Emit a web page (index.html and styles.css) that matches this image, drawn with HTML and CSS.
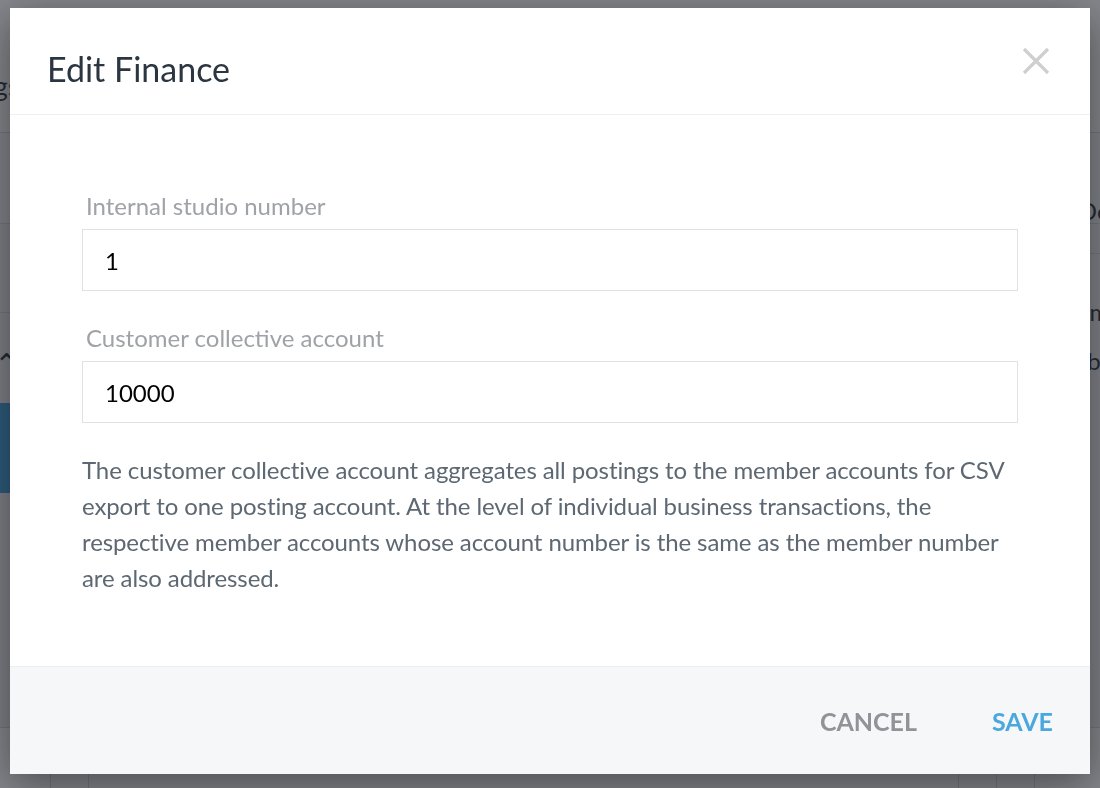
FILE: index.html
```html
<!DOCTYPE html>
<html lang="en">
<head>
    <meta charset="UTF-8">
    <meta name="viewport" content="width=device-width, initial-scale=1.0">
    <title>Edit Finance</title>
    <link rel="stylesheet" href="styles.css">
</head>
<body>
    <div class="page">
        <div class="page-head">
            <h1 class="page-title">Settings</h1>
        </div>
        <div class="page-tabs"></div>
        <div class="page-main">
            <div class="side">
                <div class="side-spacer"></div>
                <div class="side-toggle">&#8963;</div>
                <div class="side-active"></div>
            </div>
            <div class="content">
                <p class="content-row content-head">Doc</p>
                <p class="content-row">Name</p>
                <p class="content-row">Number</p>
            </div>
        </div>
        <div class="page-table">
            <span class="cell"></span>
            <span class="cell"></span>
            <span class="cell cell-wide"></span>
            <span class="cell"></span>
            <span class="cell"></span>
        </div>
    </div>

    <div class="overlay">
        <div class="modal">
            <div class="modal-header">
                <h2 class="modal-title">Edit Finance</h2>
                <button class="modal-close" aria-label="Close">
                    <svg width="28" height="28" viewBox="0 0 28 28">
                        <path d="M2 2 L26 26 M26 2 L2 26" stroke="#cfcfcf" stroke-width="3.2" fill="none" />
                    </svg>
                </button>
            </div>
            <div class="modal-body">
                <div class="field">
                    <label class="field-label" for="studioNumber">Internal studio number</label>
                    <input class="field-input" id="studioNumber" type="text" value="1">
                </div>
                <div class="field">
                    <label class="field-label" for="collectiveAccount">Customer collective account</label>
                    <input class="field-input" id="collectiveAccount" type="text" value="10000">
                </div>
                <p class="hint">
                    The customer collective account aggregates all postings to the member accounts for CSV
                    export to one posting account. At the level of individual business transactions, the
                    respective member accounts whose account number is the same as the member number
                    are also addressed.
                </p>
            </div>
            <div class="modal-footer">
                <button class="btn btn-cancel">Cancel</button>
                <button class="btn btn-save">Save</button>
            </div>
        </div>
    </div>
</body>
</html>
```

FILE: styles.css
```css
html, body {
    margin: 0;
    padding: 0;
}
body {
    font-family: Lato, "Noto Sans", sans-serif;
    background: #f4f5f7;
    color: #2c3640;
}
.page {
    min-height: 100vh;
    display: flex;
    flex-direction: column;
}
.page-head {
    height: 132px;
    background: #ffffff;
    border-bottom: 1px solid #d8dbde;
    display: flex;
    align-items: flex-end;
}
.page-title {
    margin: 0 0 30px -72px;
    font-size: 26px;
    font-weight: 400;
}
.page-tabs {
    height: 90px;
    background: #f7f8f9;
    border-bottom: 1px solid #d8dbde;
}
.page-main {
    display: flex;
    flex: 1;
}
.side {
    width: 320px;
    background: #f1f2f4;
}
.side-spacer {
    height: 88px;
    border-bottom: 1px solid #d8dbde;
}
.side-toggle {
    height: 90px;
    font-size: 30px;
    line-height: 100px;
    margin-left: -6px;
}
.side-active {
    height: 90px;
    background: #3f9fdc;
}
.content {
    flex: 1;
    display: flex;
    flex-direction: column;
    gap: 19px;
}
.content-row {
    margin: 0 -22px 0 0;
    font-size: 24px;
    line-height: 30px;
    text-align: right;
}
.content-head {
    margin-top: -28px;
    margin-bottom: 24px;
    padding-bottom: 27px;
    border-bottom: 1px solid #d8dbde;
}
.page-table {
    height: 60px;
    display: flex;
    border-top: 1px solid #d8dbde;
    background: #ffffff;
}
.cell {
    width: 37px;
    border-right: 1px solid #d8dbde;
}
.cell:first-child {
    width: 50px;
}
.cell-wide {
    width: 869px;
}

/* modal */
.overlay {
    position: fixed;
    inset: 0;
    background: rgba(33, 37, 45, 0.55);
    display: flex;
    justify-content: center;
    align-items: flex-start;
    padding-top: 8px;
}
.modal {
    width: 1080px;
    height: 766px;
    background: #ffffff;
    display: flex;
    flex-direction: column;
    box-shadow: 0 10px 40px rgba(0, 0, 0, 0.45);
}
.modal-header {
    height: 107px;
    border-bottom: 1px solid #eeeff0;
    display: flex;
    align-items: center;
    justify-content: space-between;
    padding: 14px 40px 0 37px;
    box-sizing: border-box;
}
.modal-title {
    margin: 0;
    font-size: 34px;
    font-weight: 400;
    color: #2c3640;
}
.modal-close {
    background: transparent;
    border: none;
    padding: 0;
    width: 28px;
    height: 28px;
    margin-top: -15px;
    cursor: pointer;
}
.modal-body {
    flex: 1;
    padding: 76px 72px 0;
}
.field + .field {
    margin-top: 32px;
}
.field-label {
    display: block;
    margin: 0 0 8px 4px;
    font-size: 24px;
    line-height: 30px;
    color: #9fa2a6;
}
.field-input {
    display: block;
    width: 100%;
    box-sizing: border-box;
    height: 62px;
    border: 1px solid #dfe3e5;
    padding: 0 22px;
    font-family: Lato, "Noto Sans", sans-serif;
    font-size: 24px;
    color: #000000;
    outline: none;
}
.hint {
    margin: 29px 0 0;
    font-size: 24px;
    line-height: 36px;
    letter-spacing: -0.1px;
    color: #5d6872;
}
.modal-footer {
    height: 107px;
    background: #f6f7f9;
    border-top: 1px solid #eceef0;
    display: flex;
    align-items: center;
    justify-content: flex-end;
    gap: 75px;
    padding-right: 37px;
}
.btn {
    background: transparent;
    border: none;
    padding: 0;
    font-family: Lato, "Noto Sans", sans-serif;
    font-size: 25px;
    font-weight: 700;
    text-transform: uppercase;
    cursor: pointer;
}
.btn-cancel {
    color: #909397;
}
.btn-save {
    color: #4aa8de;
}
```
